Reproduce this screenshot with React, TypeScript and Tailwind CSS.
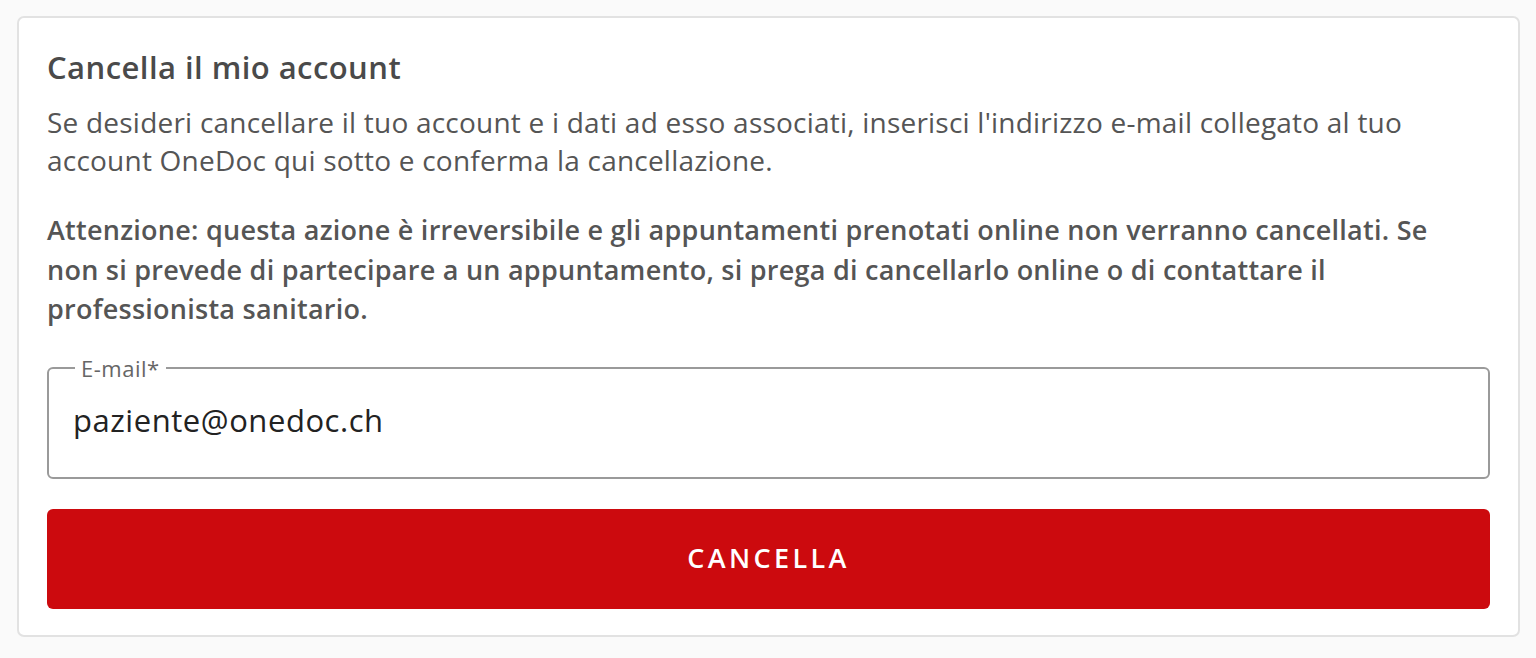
export default function App() {
  return (
    <div className="min-h-screen bg-[#fafafa] px-[17px] pt-[16px] font-['Open_Sans','Noto_Sans',sans-serif]">
      <div className="w-[1503px] rounded-[7px] border-2 border-[#e2e2e2] bg-white px-[28px] pt-[30px] pb-[26px]">
        <h1 className="text-[31px] font-semibold leading-[38px] tracking-[0.45px] text-[#4a4a4a]">Cancella il mio account</h1>
        <p className="mt-[17px] text-[28px] leading-[38px] tracking-[0.22px] text-[#555]">
          Se desideri cancellare il tuo account e i dati ad esso associati, inserisci l'indirizzo e-mail collegato al tuo
          <br />
          account OneDoc qui sotto e conferma la cancellazione.
        </p>
        <p className="mt-[31px] text-[27px] font-semibold leading-[39.5px] tracking-[0.25px] text-[#555]">
          Attenzione: questa azione è irreversibile e gli appuntamenti prenotati online non verranno cancellati. Se
          <br />
          non si prevede di partecipare a un appuntamento, si prega di cancellarlo online o di contattare il
          <br />
          professionista sanitario.
        </p>
        <fieldset className="mt-[27px] h-[123px] rounded-[6px] border-2 border-[#9a9a9a] px-[24px]">
          <legend className="ml-[2px] px-[6px] text-[22px] leading-[24px] tracking-[0.5px] text-[#666]">E-mail*</legend>
          <div className="mt-[20px] text-[31px] leading-[40px] tracking-[0.55px] text-[#222]">paziente@onedoc.ch</div>
        </fieldset>
        <button
          type="button"
          className="mt-[30px] flex h-[100px] w-full items-center justify-center rounded-[6px] bg-[#cc0a0e] text-[27px] font-semibold tracking-[3.4px] text-white"
        >
          CANCELLA
        </button>
      </div>
    </div>
  );
}
